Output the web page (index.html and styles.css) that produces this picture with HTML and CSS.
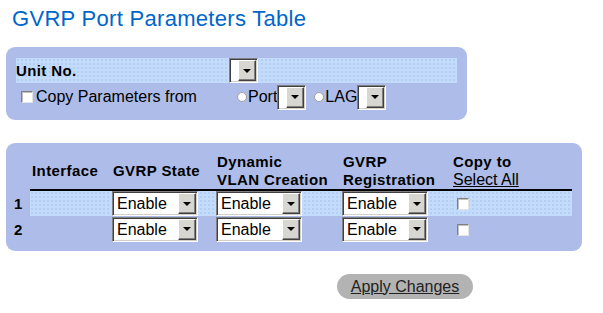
FILE: index.html
```html
<!DOCTYPE html>
<html lang="en">
<head>
  <meta charset="UTF-8" />
  <meta name="viewport" content="width=device-width, initial-scale=1.0" />
  <title>GVRP Port Parameters Table</title>
  <link rel="stylesheet" href="styles.css">
</head>
<body>

<h1 class="page-title">GVRP Port Parameters Table</h1>

<div class="panel panel-unit">
  <div class="unit-row">
    <label class="unit-label">Unit No.</label>
    <span class="dd dd-small"><select></select><span class="dd-btn"></span></span>
  </div>
  <div class="copy-row">
    <label class="copy-from"><input type="checkbox" class="chk"> Copy Parameters from</label>
    <label class="opt opt-port"><input type="radio" name="src" class="rad">Port</label>
    <span class="dd dd-small"><select></select><span class="dd-btn"></span></span>
    <label class="opt opt-lag"><input type="radio" name="src" class="rad">LAG</label>
    <span class="dd dd-small"><select></select><span class="dd-btn"></span></span>
  </div>
</div>

<div class="panel panel-table">
  <table class="gvrp">
    <colgroup>
      <col class="c-num"><col class="c-if"><col class="c-state"><col class="c-dyn"><col class="c-reg"><col class="c-copy">
    </colgroup>
    <tr class="head">
      <th class="num"></th>
      <th>Interface</th>
      <th>GVRP State</th>
      <th>Dynamic<br>VLAN Creation</th>
      <th>GVRP<br>Registration</th>
      <th>Copy to<br><a href="#" class="sel-all">Select All</a></th>
    </tr>
    <tr class="hl">
      <td class="num">1</td>
      <td></td>
      <td><span class="dd dd-wide"><select><option>Enable</option><option>Disable</option></select><span class="dd-btn"></span></span></td>
      <td><span class="dd dd-wide"><select><option>Enable</option><option>Disable</option></select><span class="dd-btn"></span></span></td>
      <td><span class="dd dd-wide"><select><option>Enable</option><option>Disable</option></select><span class="dd-btn"></span></span></td>
      <td><input type="checkbox" class="chk chk-row"></td>
    </tr>
    <tr>
      <td class="num">2</td>
      <td></td>
      <td><span class="dd dd-wide"><select><option>Enable</option><option>Disable</option></select><span class="dd-btn"></span></span></td>
      <td><span class="dd dd-wide"><select><option>Enable</option><option>Disable</option></select><span class="dd-btn"></span></span></td>
      <td><span class="dd dd-wide"><select><option>Enable</option><option>Disable</option></select><span class="dd-btn"></span></span></td>
      <td><input type="checkbox" class="chk chk-row"></td>
    </tr>
  </table>
</div>

<div class="actions">
  <button class="apply">Apply Changes</button>
</div>

</body>
</html>
```

FILE: styles.css
```css
* {
  box-sizing: border-box;
  margin: 0;
  padding: 0;
}

body {
  padding: 6px 6px 0;
  font-family: "Liberation Sans", Arial, sans-serif;
  font-size: 16px;
  color: #000;
  background: #fff;
}

.page-title {
  font-size: 22px;
  font-weight: normal;
  line-height: 25px;
  letter-spacing: 0.3px;
  color: #0066cc;
  padding-left: 6px;
}

.panel {
  background-color: #adbce8;
  border-radius: 9px;
}

.panel-unit {
  width: 461px;
  margin-top: 16px;
  padding: 11px 10px 10px;
}

.unit-row {
  display: flex;
  align-items: center;
  height: 25px;
  margin-bottom: 1px;
  background-color: #c3dcfb;
  background-image: radial-gradient(#abc6ee 0.6px, transparent 0.9px);
  background-size: 4px 4px;
}

.unit-label {
  width: 213px;
  font-size: 15px;
  font-weight: bold;
  letter-spacing: 0.4px;
}

.copy-row {
  display: flex;
  align-items: center;
  height: 26px;
}

.copy-from {
  display: flex;
  align-items: center;
  gap: 3px;
  width: 216px;
  padding-left: 5px;
}

.opt {
  display: flex;
  align-items: center;
  gap: 1px;
}

.opt-port {
  margin-left: 5px;
}

.opt-lag {
  margin-left: 8px;
}

/* classic sunken dropdown */
.dd {
  display: inline-flex;
  height: 25px;
  padding: 1px;
  border: 1px solid;
  border-color: #808080 #fff #fff #808080;
  box-shadow: inset 1px 1px 0 #404040, inset -1px -1px 0 #d4d0c8;
  background: #fff;
  vertical-align: middle;
}

.dd select {
  flex: 1;
  min-width: 0;
  height: 21px;
  appearance: none;
  -webkit-appearance: none;
  border: 0;
  outline: none;
  background: transparent;
  font-family: "Liberation Sans", Arial, sans-serif;
  font-size: 16px;
  color: #000;
  padding-left: 3px;
}

.dd-btn {
  display: flex;
  align-items: center;
  justify-content: center;
  width: 18px;
  border: 1px solid;
  border-color: #fff #404040 #404040 #fff;
  box-shadow: inset -1px -1px 0 #808080;
  background: #d8d6d0;
}

.dd-btn::after {
  content: "";
  border-left: 4px solid transparent;
  border-right: 4px solid transparent;
  border-top: 4px solid #000;
}

.dd-small {
  width: 29px;
}

.dd-wide {
  width: 86px;
}

.chk {
  appearance: none;
  -webkit-appearance: none;
  width: 12px;
  height: 12px;
  background: #fff;
  border: 1px solid;
  border-color: #808080 #e4e4e4 #e4e4e4 #808080;
  box-shadow: inset 1px 1px 0 #c0c0c0;
  vertical-align: middle;
}

.rad {
  appearance: none;
  -webkit-appearance: none;
  width: 10px;
  height: 10px;
  border-radius: 50%;
  background: #fff;
  border: 1px solid #a0a0a0;
}

.panel-table {
  width: 576px;
  margin-top: 23px;
  padding: 8px 10px 9px 6px;
}

.gvrp {
  width: 560px;
  table-layout: fixed;
  border-collapse: collapse;
  border-spacing: 0;
}

.c-num { width: 18px; }
.c-if { width: 81px; }
.c-state { width: 104px; }
.c-dyn { width: 126px; }
.c-reg { width: 110px; }
.c-copy { width: 121px; }

.gvrp th {
  text-align: left;
  font-size: 15px;
  font-weight: bold;
  letter-spacing: 0.4px;
  line-height: 18px;
  padding: 2px 2px 0;
  border-bottom: 2px solid #000;
}

.gvrp th.num {
  border-bottom: 0;
}

.sel-all {
  font-size: 16px;
  font-weight: normal;
  letter-spacing: 0;
  color: #000;
  text-decoration: underline;
}

.gvrp td {
  height: 26px;
  padding: 0 1px;
  vertical-align: middle;
}

.gvrp td.num {
  padding-left: 2px;
  font-size: 15px;
  font-weight: bold;
}

.gvrp tr.hl td:not(.num) {
  background-color: #c3dcfb;
  background-image: radial-gradient(#abc6ee 0.6px, transparent 0.9px);
  background-size: 4px 4px;
}

.chk-row {
  margin-left: 5px;
}

.actions {
  margin-top: 23px;
  padding-left: 331px;
}

.apply {
  width: 136px;
  height: 25px;
  border: 0;
  border-radius: 13px;
  background: #b3b3b3;
  font-family: "Liberation Sans", Arial, sans-serif;
  font-size: 16px;
  color: #222;
  text-decoration: underline;
  cursor: pointer;
}
```
